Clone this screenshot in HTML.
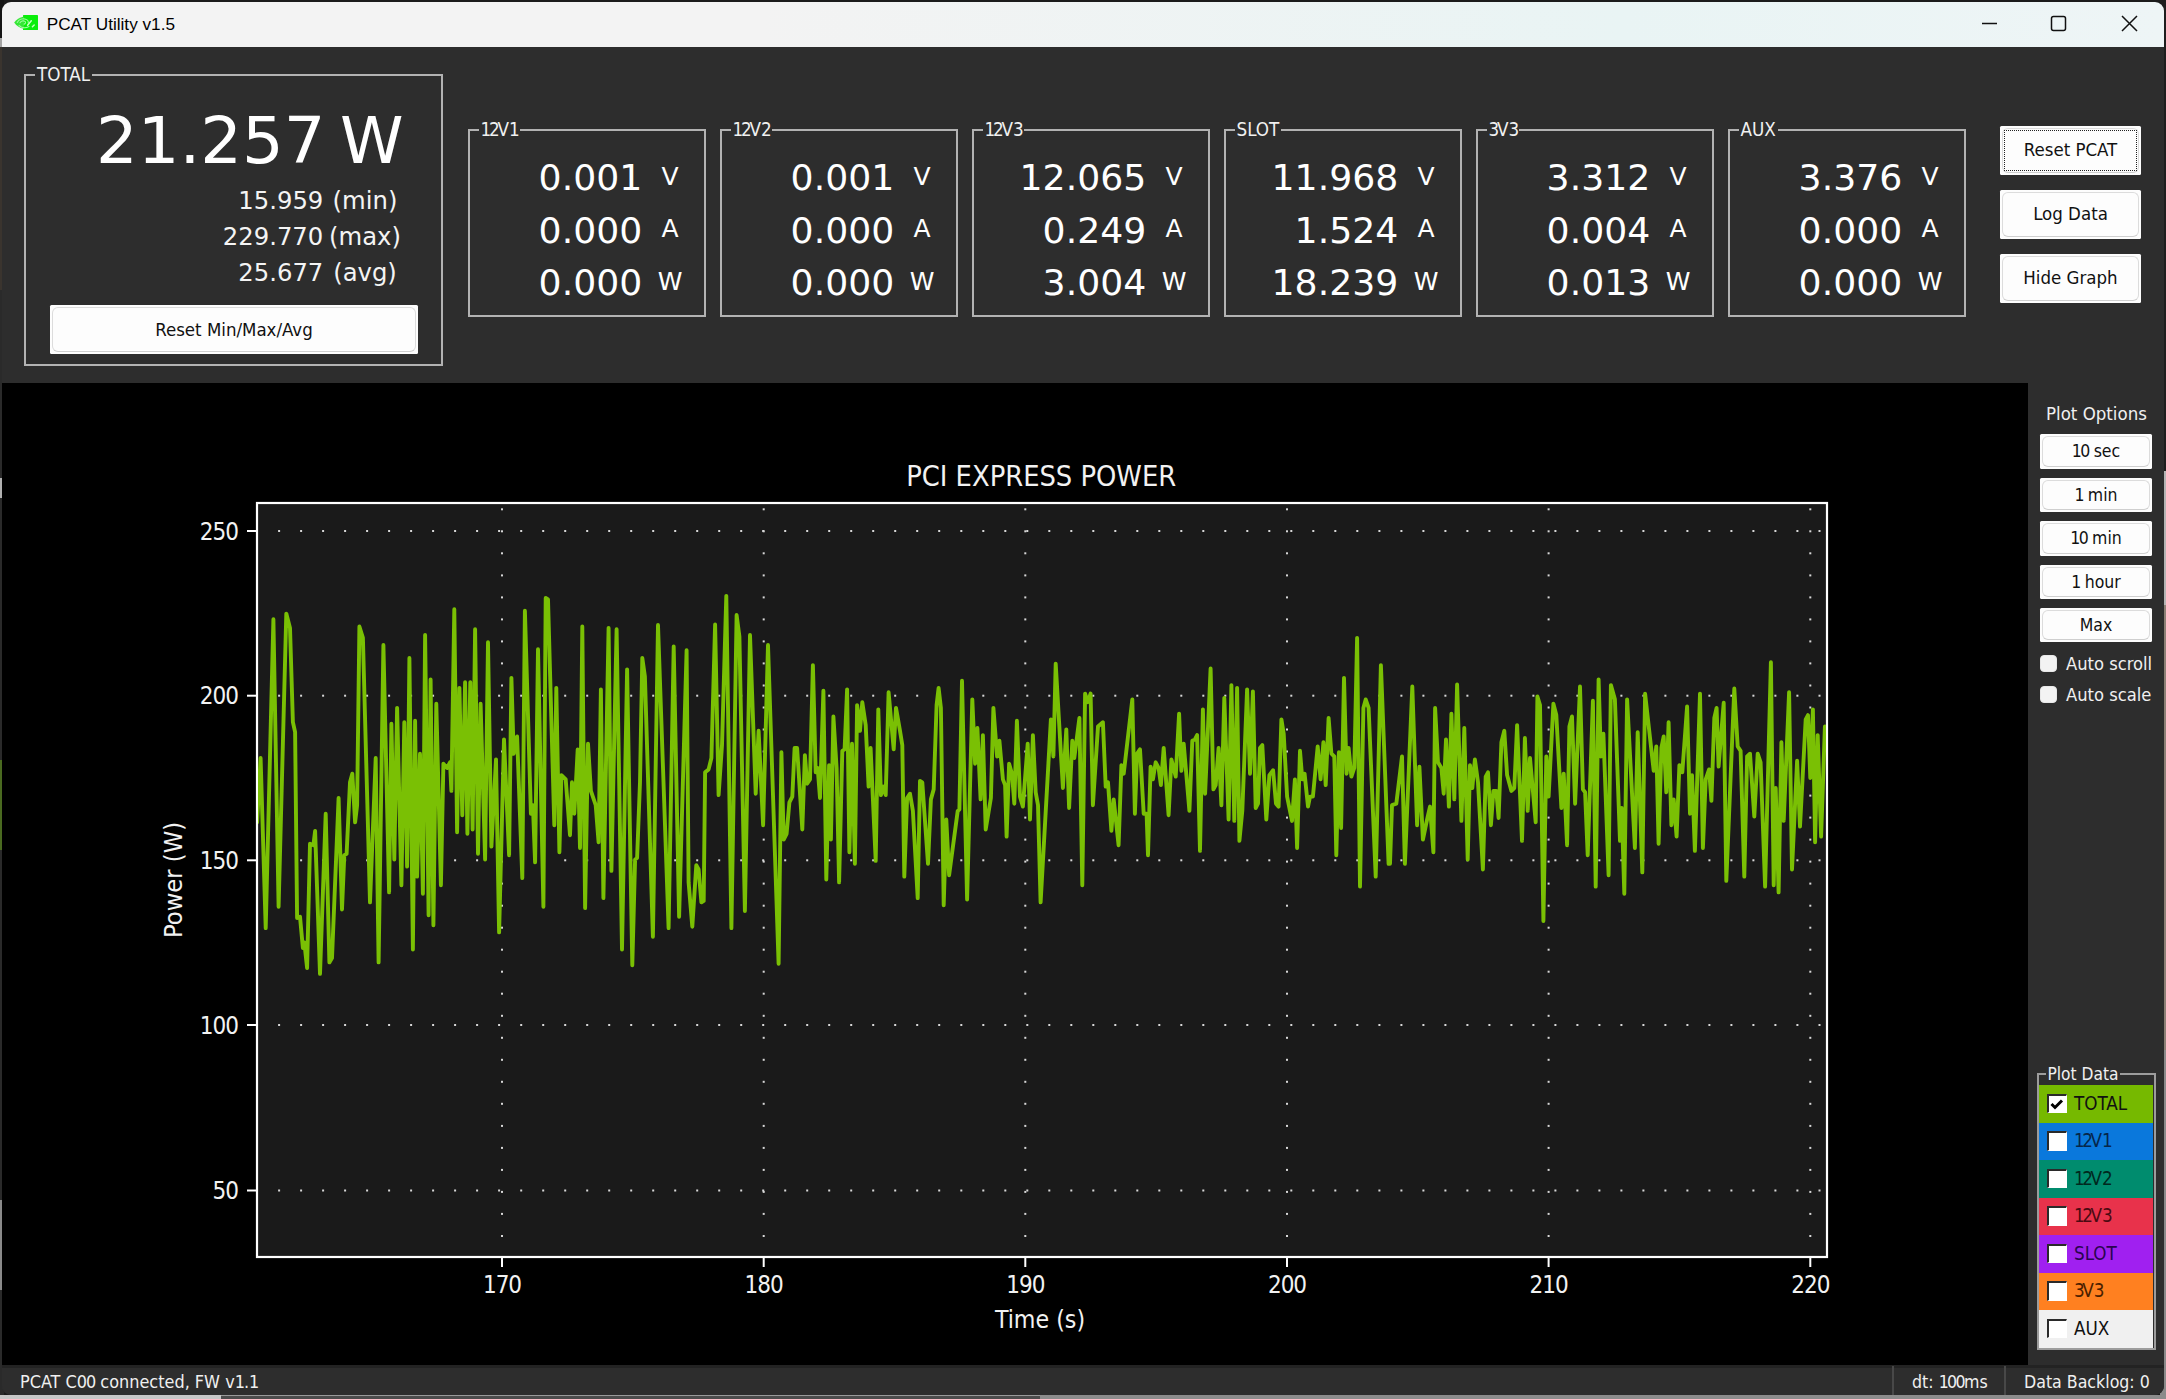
<!DOCTYPE html><html><head><meta charset="utf-8"><title>PCAT Utility v1.5</title><style>
*{box-sizing:border-box;margin:0;padding:0}
html,body{width:2166px;height:1399px;overflow:hidden;background:#1b1b1b}
body{position:relative;font-family:"Liberation Sans","DejaVu Sans",sans-serif;}
.abs{position:absolute}
#win{position:absolute;left:2px;top:2px;width:2161.7px;height:1393px;border-radius:9px;overflow:hidden;background:#2d2d2d}
#title{position:absolute;left:0;top:0;width:100%;height:45px;background:linear-gradient(90deg,#f3f3f3 0%,#f3f3f3 35%,#e9f4f4 75%,#eef5f6 100%)}
#title .t{position:absolute;left:44.7px;top:12px;font-size:17.2px;color:#000;white-space:nowrap;line-height:20px}
.gb{position:absolute;border:2px solid #b2b2b2}
.gbl{position:absolute;background:#2d2d2d;color:#f0f0f0;font-family:"DejaVu Sans Condensed","DejaVu Sans","Liberation Sans",sans-serif;white-space:nowrap;line-height:20px;padding:0 2px}
.num{position:absolute;font-family:"DejaVu Sans","Liberation Sans",sans-serif;color:#fff;white-space:nowrap;text-align:right}
.btn{position:absolute;background:#fdfdfd;border-radius:1.5px;color:#111;font-family:"DejaVu Sans Condensed","DejaVu Sans","Liberation Sans",sans-serif;text-align:center;white-space:nowrap}
.btn::after{content:"";position:absolute;left:2px;top:2px;right:2px;bottom:2px;border:1.5px solid #dcdcdc;border-bottom-color:#cfcfcf;border-radius:6px}
.lbl{position:absolute;color:#f0f0f0;font-family:"DejaVu Sans Condensed","DejaVu Sans","Liberation Sans",sans-serif;white-space:nowrap}
.cb{position:absolute;width:17px;height:17px;background:#f3f3f3;border:1px solid #e8e8e8;border-radius:4px}
.row{position:absolute;left:2037px;width:114px;height:37.5px}
.row .b{position:absolute;left:8px;top:8.7px;width:19.5px;height:19.5px;background:#fff;border-top:2px solid #2a2a2a;border-left:2px solid #2a2a2a;border-right:1.5px solid rgba(255,255,255,.55);border-bottom:1.5px solid rgba(255,255,255,.55)}
.row .x{position:absolute;left:35px;top:7.6px;font-family:"DejaVu Sans Condensed","DejaVu Sans","Liberation Sans",sans-serif;font-size:18.7px;line-height:22px;white-space:nowrap}
</style></head><body><div class="abs" style="left:0;top:0;width:4px;height:1399px;background:linear-gradient(180deg,#151515 0,#151515 38px,#a4a4a4 38px,#a4a4a4 47px,#3a342e 47px,#3a342e 290px,#2a2a2a 290px,#2a2a2a 478px,#b0b0b0 478px,#b0b0b0 498px,#2a2a2a 498px,#2a2a2a 760px,#4a6a20 760px,#4a6a20 850px,#2a2a2a 850px,#2a2a2a 1200px,#8a8a8a 1200px,#8a8a8a 1290px,#2a2a2a 1290px)"></div><div class="abs" style="left:2160px;top:0;width:6px;height:1399px;background:linear-gradient(180deg,#1e1e1e 0,#1e1e1e 471px,#b4b4b4 471px,#b4b4b4 605px,#8c8076 605px,#8c8076 1050px,#8a8a8a 1050px)"></div><div class="abs" style="left:0;top:1395px;width:2166px;height:4px;background:linear-gradient(90deg,#c6c6c6 0,#c6c6c6 221px,#4c4c4c 221px,#4c4c4c 1040px,#8c8c8c 1040px)"></div><div class="abs" style="left:221px;top:1395px;width:819px;height:1px;background:#9a9a9a"></div><div id="win"><div id="title"><svg class="abs" style="left:12px;top:13.1px" width="24" height="15.2" viewBox="0 0 24 15.2"><rect x="9" y="0" width="15" height="15.2" rx="0.6" fill="#0bee0b"/><path d="M10 1.6C5.5 2.4 2.2 5 0.2 7.4C2.2 10.4 5.5 13 10 13.8Z" fill="#35e635"/><g fill="none" stroke="#9cfb9c" stroke-width="1.1" stroke-linecap="round"><path d="M3.2 7.5C5 4.6 8.6 3.2 11.6 4.2C13.6 4.9 14.6 6.4 14.2 7.8"/><path d="M6 7.8C7 6 9.4 5.3 11 6.4C12 7.2 11.4 8.8 10 9.2"/><path d="M5 10.4C7.4 13 11.6 13.4 15 11.6"/></g><g stroke="#c8ffc0" stroke-width="1.5" stroke-linecap="round"><path d="M17.3 5.8L13.6 10.2"/><path d="M20.2 10L18.4 11.7"/></g></svg><div class="t">PCAT Utility v1.5</div><svg class="abs" style="left:1975px;top:10px" width="170" height="28" viewBox="0 0 170 28"><g stroke="#111" stroke-width="1.5" fill="none"><path d="M5 11.5H20"/><rect x="74.5" y="4.5" width="14" height="14" rx="2"/><path d="M145 4L160 19M160 4L145 19"/></g></svg></div><div class="gb" style="left:22px;top:72px;width:419px;height:292px"></div><div class="gbl" style="left:33px;top:62.8px;font-size:18.7px">TOTAL</div><div class="num" style="left:40px;width:283.5px;top:99px;font-size:64.3px;line-height:80px;transform:scaleX(1.02);transform-origin:100% 50%" id="big">21.257</div><div class="num" style="left:338px;width:66px;top:99px;font-size:64.3px;line-height:80px;text-align:left;transform-origin:0 50%;transform:scaleX(1.0)" id="bigw">W</div><div class="num" style="left:120px;width:201.3px;top:182px;font-size:24.3px;line-height:34px;color:#f4f4f4">15.959</div><div class="num" style="left:303px;width:120px;text-align:center;top:182px;font-size:24.3px;line-height:34px;color:#f4f4f4">(min)</div><div class="num" style="left:120px;width:201.3px;top:218px;font-size:24.3px;line-height:34px;color:#f4f4f4">229.770</div><div class="num" style="left:303px;width:120px;text-align:center;top:218px;font-size:24.3px;line-height:34px;color:#f4f4f4">(max)</div><div class="num" style="left:120px;width:201.3px;top:254px;font-size:24.3px;line-height:34px;color:#f4f4f4">25.677</div><div class="num" style="left:303px;width:120px;text-align:center;top:254px;font-size:24.3px;line-height:34px;color:#f4f4f4">(avg)</div><div class="btn" style="left:48px;top:303px;width:368px;height:49px;font-size:18.5px;line-height:49px">Reset Min/Max/Avg</div><div class="gb" style="left:466px;top:127px;width:238px;height:188px"></div><div class="gbl" style="left:476.5px;top:117.8px;font-size:18.7px"><span style="letter-spacing:-2.2px">12</span>V<span style="letter-spacing:-2.2px">1</span></div><div class="num" style="left:447px;width:193.3px;top:152.0px;font-size:35.7px;line-height:48px;transform:scaleX(1.015);transform-origin:100% 50%">0.001</div><div class="num" style="left:638px;width:60px;text-align:center;top:150.5px;font-size:25px;line-height:48px">V</div><div class="num" style="left:447px;width:193.3px;top:204.5px;font-size:35.7px;line-height:48px;transform:scaleX(1.015);transform-origin:100% 50%">0.000</div><div class="num" style="left:638px;width:60px;text-align:center;top:203px;font-size:25px;line-height:48px">A</div><div class="num" style="left:447px;width:193.3px;top:257.0px;font-size:35.7px;line-height:48px;transform:scaleX(1.015);transform-origin:100% 50%">0.000</div><div class="num" style="left:638px;width:60px;text-align:center;top:255.5px;font-size:25px;line-height:48px">W</div><div class="gb" style="left:718px;top:127px;width:238px;height:188px"></div><div class="gbl" style="left:728.5px;top:117.8px;font-size:18.7px"><span style="letter-spacing:-2.2px">12</span>V<span style="letter-spacing:-2.2px">2</span></div><div class="num" style="left:699px;width:193.3px;top:152.0px;font-size:35.7px;line-height:48px;transform:scaleX(1.015);transform-origin:100% 50%">0.001</div><div class="num" style="left:890px;width:60px;text-align:center;top:150.5px;font-size:25px;line-height:48px">V</div><div class="num" style="left:699px;width:193.3px;top:204.5px;font-size:35.7px;line-height:48px;transform:scaleX(1.015);transform-origin:100% 50%">0.000</div><div class="num" style="left:890px;width:60px;text-align:center;top:203px;font-size:25px;line-height:48px">A</div><div class="num" style="left:699px;width:193.3px;top:257.0px;font-size:35.7px;line-height:48px;transform:scaleX(1.015);transform-origin:100% 50%">0.000</div><div class="num" style="left:890px;width:60px;text-align:center;top:255.5px;font-size:25px;line-height:48px">W</div><div class="gb" style="left:970px;top:127px;width:238px;height:188px"></div><div class="gbl" style="left:980.5px;top:117.8px;font-size:18.7px"><span style="letter-spacing:-2.2px">12</span>V<span style="letter-spacing:-2.2px">3</span></div><div class="num" style="left:951px;width:193.3px;top:152.0px;font-size:35.7px;line-height:48px;transform:scaleX(1.015);transform-origin:100% 50%">12.065</div><div class="num" style="left:1142px;width:60px;text-align:center;top:150.5px;font-size:25px;line-height:48px">V</div><div class="num" style="left:951px;width:193.3px;top:204.5px;font-size:35.7px;line-height:48px;transform:scaleX(1.015);transform-origin:100% 50%">0.249</div><div class="num" style="left:1142px;width:60px;text-align:center;top:203px;font-size:25px;line-height:48px">A</div><div class="num" style="left:951px;width:193.3px;top:257.0px;font-size:35.7px;line-height:48px;transform:scaleX(1.015);transform-origin:100% 50%">3.004</div><div class="num" style="left:1142px;width:60px;text-align:center;top:255.5px;font-size:25px;line-height:48px">W</div><div class="gb" style="left:1222px;top:127px;width:238px;height:188px"></div><div class="gbl" style="left:1232.5px;top:117.8px;font-size:18.7px">SLOT</div><div class="num" style="left:1203px;width:193.3px;top:152.0px;font-size:35.7px;line-height:48px;transform:scaleX(1.015);transform-origin:100% 50%">11.968</div><div class="num" style="left:1394px;width:60px;text-align:center;top:150.5px;font-size:25px;line-height:48px">V</div><div class="num" style="left:1203px;width:193.3px;top:204.5px;font-size:35.7px;line-height:48px;transform:scaleX(1.015);transform-origin:100% 50%">1.524</div><div class="num" style="left:1394px;width:60px;text-align:center;top:203px;font-size:25px;line-height:48px">A</div><div class="num" style="left:1203px;width:193.3px;top:257.0px;font-size:35.7px;line-height:48px;transform:scaleX(1.015);transform-origin:100% 50%">18.239</div><div class="num" style="left:1394px;width:60px;text-align:center;top:255.5px;font-size:25px;line-height:48px">W</div><div class="gb" style="left:1474px;top:127px;width:238px;height:188px"></div><div class="gbl" style="left:1484.5px;top:117.8px;font-size:18.7px"><span style="letter-spacing:-2.2px">3</span>V<span style="letter-spacing:-2.2px">3</span></div><div class="num" style="left:1455px;width:193.3px;top:152.0px;font-size:35.7px;line-height:48px;transform:scaleX(1.015);transform-origin:100% 50%">3.312</div><div class="num" style="left:1646px;width:60px;text-align:center;top:150.5px;font-size:25px;line-height:48px">V</div><div class="num" style="left:1455px;width:193.3px;top:204.5px;font-size:35.7px;line-height:48px;transform:scaleX(1.015);transform-origin:100% 50%">0.004</div><div class="num" style="left:1646px;width:60px;text-align:center;top:203px;font-size:25px;line-height:48px">A</div><div class="num" style="left:1455px;width:193.3px;top:257.0px;font-size:35.7px;line-height:48px;transform:scaleX(1.015);transform-origin:100% 50%">0.013</div><div class="num" style="left:1646px;width:60px;text-align:center;top:255.5px;font-size:25px;line-height:48px">W</div><div class="gb" style="left:1726px;top:127px;width:238px;height:188px"></div><div class="gbl" style="left:1736.5px;top:117.8px;font-size:18.7px">AUX</div><div class="num" style="left:1707px;width:193.3px;top:152.0px;font-size:35.7px;line-height:48px;transform:scaleX(1.015);transform-origin:100% 50%">3.376</div><div class="num" style="left:1898px;width:60px;text-align:center;top:150.5px;font-size:25px;line-height:48px">V</div><div class="num" style="left:1707px;width:193.3px;top:204.5px;font-size:35.7px;line-height:48px;transform:scaleX(1.015);transform-origin:100% 50%">0.000</div><div class="num" style="left:1898px;width:60px;text-align:center;top:203px;font-size:25px;line-height:48px">A</div><div class="num" style="left:1707px;width:193.3px;top:257.0px;font-size:35.7px;line-height:48px;transform:scaleX(1.015);transform-origin:100% 50%">0.000</div><div class="num" style="left:1898px;width:60px;text-align:center;top:255.5px;font-size:25px;line-height:48px">W</div><div class="btn" style="left:1998px;top:123.5px;width:141px;height:49px;font-size:18.5px;line-height:47.5px">Reset PCAT</div><div class="btn" style="left:1998px;top:187.8px;width:141px;height:49px;font-size:18.5px;line-height:47.5px">Log Data</div><div class="btn" style="left:1998px;top:252.1px;width:141px;height:49px;font-size:18.5px;line-height:47.5px">Hide Graph</div><div class="abs" style="left:2002px;top:127.5px;width:133px;height:41px;border:1.5px dotted #222"></div><div class="abs" style="left:0;top:381px;width:2026px;height:983px;background:#000"></div><svg class="abs" style="left:0px;top:381px" width="2026" height="983" viewBox="0 0 2026 983" font-family='"DejaVu Sans Condensed","DejaVu Sans","Liberation Sans",sans-serif'><rect x="255" y="120" width="1570" height="754" fill="#1a1a1a" stroke="#fff" stroke-width="2.2"/><g fill="#d8d8d8"><rect x="276.1" y="147.0" width="2" height="2"/><rect x="298.1" y="147.0" width="2" height="2"/><rect x="320.1" y="147.0" width="2" height="2"/><rect x="342.1" y="147.0" width="2" height="2"/><rect x="364.1" y="147.0" width="2" height="2"/><rect x="386.1" y="147.0" width="2" height="2"/><rect x="408.1" y="147.0" width="2" height="2"/><rect x="430.1" y="147.0" width="2" height="2"/><rect x="452.1" y="147.0" width="2" height="2"/><rect x="474.1" y="147.0" width="2" height="2"/><rect x="496.1" y="147.0" width="2" height="2"/><rect x="518.2" y="147.0" width="2" height="2"/><rect x="540.2" y="147.0" width="2" height="2"/><rect x="562.2" y="147.0" width="2" height="2"/><rect x="584.2" y="147.0" width="2" height="2"/><rect x="606.2" y="147.0" width="2" height="2"/><rect x="628.2" y="147.0" width="2" height="2"/><rect x="650.2" y="147.0" width="2" height="2"/><rect x="672.2" y="147.0" width="2" height="2"/><rect x="694.2" y="147.0" width="2" height="2"/><rect x="716.2" y="147.0" width="2" height="2"/><rect x="738.2" y="147.0" width="2" height="2"/><rect x="760.2" y="147.0" width="2" height="2"/><rect x="782.2" y="147.0" width="2" height="2"/><rect x="804.2" y="147.0" width="2" height="2"/><rect x="826.2" y="147.0" width="2" height="2"/><rect x="848.2" y="147.0" width="2" height="2"/><rect x="870.2" y="147.0" width="2" height="2"/><rect x="892.2" y="147.0" width="2" height="2"/><rect x="914.2" y="147.0" width="2" height="2"/><rect x="936.2" y="147.0" width="2" height="2"/><rect x="958.3" y="147.0" width="2" height="2"/><rect x="980.3" y="147.0" width="2" height="2"/><rect x="1002.3" y="147.0" width="2" height="2"/><rect x="1024.3" y="147.0" width="2" height="2"/><rect x="1046.3" y="147.0" width="2" height="2"/><rect x="1068.3" y="147.0" width="2" height="2"/><rect x="1090.3" y="147.0" width="2" height="2"/><rect x="1112.3" y="147.0" width="2" height="2"/><rect x="1134.3" y="147.0" width="2" height="2"/><rect x="1156.3" y="147.0" width="2" height="2"/><rect x="1178.3" y="147.0" width="2" height="2"/><rect x="1200.3" y="147.0" width="2" height="2"/><rect x="1222.3" y="147.0" width="2" height="2"/><rect x="1244.3" y="147.0" width="2" height="2"/><rect x="1266.3" y="147.0" width="2" height="2"/><rect x="1288.3" y="147.0" width="2" height="2"/><rect x="1310.3" y="147.0" width="2" height="2"/><rect x="1332.3" y="147.0" width="2" height="2"/><rect x="1354.3" y="147.0" width="2" height="2"/><rect x="1376.4" y="147.0" width="2" height="2"/><rect x="1398.4" y="147.0" width="2" height="2"/><rect x="1420.4" y="147.0" width="2" height="2"/><rect x="1442.4" y="147.0" width="2" height="2"/><rect x="1464.4" y="147.0" width="2" height="2"/><rect x="1486.4" y="147.0" width="2" height="2"/><rect x="1508.4" y="147.0" width="2" height="2"/><rect x="1530.4" y="147.0" width="2" height="2"/><rect x="1552.4" y="147.0" width="2" height="2"/><rect x="1574.4" y="147.0" width="2" height="2"/><rect x="1596.4" y="147.0" width="2" height="2"/><rect x="1618.4" y="147.0" width="2" height="2"/><rect x="1640.4" y="147.0" width="2" height="2"/><rect x="1662.4" y="147.0" width="2" height="2"/><rect x="1684.4" y="147.0" width="2" height="2"/><rect x="1706.4" y="147.0" width="2" height="2"/><rect x="1728.4" y="147.0" width="2" height="2"/><rect x="1750.4" y="147.0" width="2" height="2"/><rect x="1772.4" y="147.0" width="2" height="2"/><rect x="1794.4" y="147.0" width="2" height="2"/><rect x="1816.5" y="147.0" width="2" height="2"/><rect x="276.1" y="311.7" width="2" height="2"/><rect x="298.1" y="311.7" width="2" height="2"/><rect x="320.1" y="311.7" width="2" height="2"/><rect x="342.1" y="311.7" width="2" height="2"/><rect x="364.1" y="311.7" width="2" height="2"/><rect x="386.1" y="311.7" width="2" height="2"/><rect x="408.1" y="311.7" width="2" height="2"/><rect x="430.1" y="311.7" width="2" height="2"/><rect x="452.1" y="311.7" width="2" height="2"/><rect x="474.1" y="311.7" width="2" height="2"/><rect x="496.1" y="311.7" width="2" height="2"/><rect x="518.2" y="311.7" width="2" height="2"/><rect x="540.2" y="311.7" width="2" height="2"/><rect x="562.2" y="311.7" width="2" height="2"/><rect x="584.2" y="311.7" width="2" height="2"/><rect x="606.2" y="311.7" width="2" height="2"/><rect x="628.2" y="311.7" width="2" height="2"/><rect x="650.2" y="311.7" width="2" height="2"/><rect x="672.2" y="311.7" width="2" height="2"/><rect x="694.2" y="311.7" width="2" height="2"/><rect x="716.2" y="311.7" width="2" height="2"/><rect x="738.2" y="311.7" width="2" height="2"/><rect x="760.2" y="311.7" width="2" height="2"/><rect x="782.2" y="311.7" width="2" height="2"/><rect x="804.2" y="311.7" width="2" height="2"/><rect x="826.2" y="311.7" width="2" height="2"/><rect x="848.2" y="311.7" width="2" height="2"/><rect x="870.2" y="311.7" width="2" height="2"/><rect x="892.2" y="311.7" width="2" height="2"/><rect x="914.2" y="311.7" width="2" height="2"/><rect x="936.2" y="311.7" width="2" height="2"/><rect x="958.3" y="311.7" width="2" height="2"/><rect x="980.3" y="311.7" width="2" height="2"/><rect x="1002.3" y="311.7" width="2" height="2"/><rect x="1024.3" y="311.7" width="2" height="2"/><rect x="1046.3" y="311.7" width="2" height="2"/><rect x="1068.3" y="311.7" width="2" height="2"/><rect x="1090.3" y="311.7" width="2" height="2"/><rect x="1112.3" y="311.7" width="2" height="2"/><rect x="1134.3" y="311.7" width="2" height="2"/><rect x="1156.3" y="311.7" width="2" height="2"/><rect x="1178.3" y="311.7" width="2" height="2"/><rect x="1200.3" y="311.7" width="2" height="2"/><rect x="1222.3" y="311.7" width="2" height="2"/><rect x="1244.3" y="311.7" width="2" height="2"/><rect x="1266.3" y="311.7" width="2" height="2"/><rect x="1288.3" y="311.7" width="2" height="2"/><rect x="1310.3" y="311.7" width="2" height="2"/><rect x="1332.3" y="311.7" width="2" height="2"/><rect x="1354.3" y="311.7" width="2" height="2"/><rect x="1376.4" y="311.7" width="2" height="2"/><rect x="1398.4" y="311.7" width="2" height="2"/><rect x="1420.4" y="311.7" width="2" height="2"/><rect x="1442.4" y="311.7" width="2" height="2"/><rect x="1464.4" y="311.7" width="2" height="2"/><rect x="1486.4" y="311.7" width="2" height="2"/><rect x="1508.4" y="311.7" width="2" height="2"/><rect x="1530.4" y="311.7" width="2" height="2"/><rect x="1552.4" y="311.7" width="2" height="2"/><rect x="1574.4" y="311.7" width="2" height="2"/><rect x="1596.4" y="311.7" width="2" height="2"/><rect x="1618.4" y="311.7" width="2" height="2"/><rect x="1640.4" y="311.7" width="2" height="2"/><rect x="1662.4" y="311.7" width="2" height="2"/><rect x="1684.4" y="311.7" width="2" height="2"/><rect x="1706.4" y="311.7" width="2" height="2"/><rect x="1728.4" y="311.7" width="2" height="2"/><rect x="1750.4" y="311.7" width="2" height="2"/><rect x="1772.4" y="311.7" width="2" height="2"/><rect x="1794.4" y="311.7" width="2" height="2"/><rect x="1816.5" y="311.7" width="2" height="2"/><rect x="276.1" y="476.3" width="2" height="2"/><rect x="298.1" y="476.3" width="2" height="2"/><rect x="320.1" y="476.3" width="2" height="2"/><rect x="342.1" y="476.3" width="2" height="2"/><rect x="364.1" y="476.3" width="2" height="2"/><rect x="386.1" y="476.3" width="2" height="2"/><rect x="408.1" y="476.3" width="2" height="2"/><rect x="430.1" y="476.3" width="2" height="2"/><rect x="452.1" y="476.3" width="2" height="2"/><rect x="474.1" y="476.3" width="2" height="2"/><rect x="496.1" y="476.3" width="2" height="2"/><rect x="518.2" y="476.3" width="2" height="2"/><rect x="540.2" y="476.3" width="2" height="2"/><rect x="562.2" y="476.3" width="2" height="2"/><rect x="584.2" y="476.3" width="2" height="2"/><rect x="606.2" y="476.3" width="2" height="2"/><rect x="628.2" y="476.3" width="2" height="2"/><rect x="650.2" y="476.3" width="2" height="2"/><rect x="672.2" y="476.3" width="2" height="2"/><rect x="694.2" y="476.3" width="2" height="2"/><rect x="716.2" y="476.3" width="2" height="2"/><rect x="738.2" y="476.3" width="2" height="2"/><rect x="760.2" y="476.3" width="2" height="2"/><rect x="782.2" y="476.3" width="2" height="2"/><rect x="804.2" y="476.3" width="2" height="2"/><rect x="826.2" y="476.3" width="2" height="2"/><rect x="848.2" y="476.3" width="2" height="2"/><rect x="870.2" y="476.3" width="2" height="2"/><rect x="892.2" y="476.3" width="2" height="2"/><rect x="914.2" y="476.3" width="2" height="2"/><rect x="936.2" y="476.3" width="2" height="2"/><rect x="958.3" y="476.3" width="2" height="2"/><rect x="980.3" y="476.3" width="2" height="2"/><rect x="1002.3" y="476.3" width="2" height="2"/><rect x="1024.3" y="476.3" width="2" height="2"/><rect x="1046.3" y="476.3" width="2" height="2"/><rect x="1068.3" y="476.3" width="2" height="2"/><rect x="1090.3" y="476.3" width="2" height="2"/><rect x="1112.3" y="476.3" width="2" height="2"/><rect x="1134.3" y="476.3" width="2" height="2"/><rect x="1156.3" y="476.3" width="2" height="2"/><rect x="1178.3" y="476.3" width="2" height="2"/><rect x="1200.3" y="476.3" width="2" height="2"/><rect x="1222.3" y="476.3" width="2" height="2"/><rect x="1244.3" y="476.3" width="2" height="2"/><rect x="1266.3" y="476.3" width="2" height="2"/><rect x="1288.3" y="476.3" width="2" height="2"/><rect x="1310.3" y="476.3" width="2" height="2"/><rect x="1332.3" y="476.3" width="2" height="2"/><rect x="1354.3" y="476.3" width="2" height="2"/><rect x="1376.4" y="476.3" width="2" height="2"/><rect x="1398.4" y="476.3" width="2" height="2"/><rect x="1420.4" y="476.3" width="2" height="2"/><rect x="1442.4" y="476.3" width="2" height="2"/><rect x="1464.4" y="476.3" width="2" height="2"/><rect x="1486.4" y="476.3" width="2" height="2"/><rect x="1508.4" y="476.3" width="2" height="2"/><rect x="1530.4" y="476.3" width="2" height="2"/><rect x="1552.4" y="476.3" width="2" height="2"/><rect x="1574.4" y="476.3" width="2" height="2"/><rect x="1596.4" y="476.3" width="2" height="2"/><rect x="1618.4" y="476.3" width="2" height="2"/><rect x="1640.4" y="476.3" width="2" height="2"/><rect x="1662.4" y="476.3" width="2" height="2"/><rect x="1684.4" y="476.3" width="2" height="2"/><rect x="1706.4" y="476.3" width="2" height="2"/><rect x="1728.4" y="476.3" width="2" height="2"/><rect x="1750.4" y="476.3" width="2" height="2"/><rect x="1772.4" y="476.3" width="2" height="2"/><rect x="1794.4" y="476.3" width="2" height="2"/><rect x="1816.5" y="476.3" width="2" height="2"/><rect x="276.1" y="641.0" width="2" height="2"/><rect x="298.1" y="641.0" width="2" height="2"/><rect x="320.1" y="641.0" width="2" height="2"/><rect x="342.1" y="641.0" width="2" height="2"/><rect x="364.1" y="641.0" width="2" height="2"/><rect x="386.1" y="641.0" width="2" height="2"/><rect x="408.1" y="641.0" width="2" height="2"/><rect x="430.1" y="641.0" width="2" height="2"/><rect x="452.1" y="641.0" width="2" height="2"/><rect x="474.1" y="641.0" width="2" height="2"/><rect x="496.1" y="641.0" width="2" height="2"/><rect x="518.2" y="641.0" width="2" height="2"/><rect x="540.2" y="641.0" width="2" height="2"/><rect x="562.2" y="641.0" width="2" height="2"/><rect x="584.2" y="641.0" width="2" height="2"/><rect x="606.2" y="641.0" width="2" height="2"/><rect x="628.2" y="641.0" width="2" height="2"/><rect x="650.2" y="641.0" width="2" height="2"/><rect x="672.2" y="641.0" width="2" height="2"/><rect x="694.2" y="641.0" width="2" height="2"/><rect x="716.2" y="641.0" width="2" height="2"/><rect x="738.2" y="641.0" width="2" height="2"/><rect x="760.2" y="641.0" width="2" height="2"/><rect x="782.2" y="641.0" width="2" height="2"/><rect x="804.2" y="641.0" width="2" height="2"/><rect x="826.2" y="641.0" width="2" height="2"/><rect x="848.2" y="641.0" width="2" height="2"/><rect x="870.2" y="641.0" width="2" height="2"/><rect x="892.2" y="641.0" width="2" height="2"/><rect x="914.2" y="641.0" width="2" height="2"/><rect x="936.2" y="641.0" width="2" height="2"/><rect x="958.3" y="641.0" width="2" height="2"/><rect x="980.3" y="641.0" width="2" height="2"/><rect x="1002.3" y="641.0" width="2" height="2"/><rect x="1024.3" y="641.0" width="2" height="2"/><rect x="1046.3" y="641.0" width="2" height="2"/><rect x="1068.3" y="641.0" width="2" height="2"/><rect x="1090.3" y="641.0" width="2" height="2"/><rect x="1112.3" y="641.0" width="2" height="2"/><rect x="1134.3" y="641.0" width="2" height="2"/><rect x="1156.3" y="641.0" width="2" height="2"/><rect x="1178.3" y="641.0" width="2" height="2"/><rect x="1200.3" y="641.0" width="2" height="2"/><rect x="1222.3" y="641.0" width="2" height="2"/><rect x="1244.3" y="641.0" width="2" height="2"/><rect x="1266.3" y="641.0" width="2" height="2"/><rect x="1288.3" y="641.0" width="2" height="2"/><rect x="1310.3" y="641.0" width="2" height="2"/><rect x="1332.3" y="641.0" width="2" height="2"/><rect x="1354.3" y="641.0" width="2" height="2"/><rect x="1376.4" y="641.0" width="2" height="2"/><rect x="1398.4" y="641.0" width="2" height="2"/><rect x="1420.4" y="641.0" width="2" height="2"/><rect x="1442.4" y="641.0" width="2" height="2"/><rect x="1464.4" y="641.0" width="2" height="2"/><rect x="1486.4" y="641.0" width="2" height="2"/><rect x="1508.4" y="641.0" width="2" height="2"/><rect x="1530.4" y="641.0" width="2" height="2"/><rect x="1552.4" y="641.0" width="2" height="2"/><rect x="1574.4" y="641.0" width="2" height="2"/><rect x="1596.4" y="641.0" width="2" height="2"/><rect x="1618.4" y="641.0" width="2" height="2"/><rect x="1640.4" y="641.0" width="2" height="2"/><rect x="1662.4" y="641.0" width="2" height="2"/><rect x="1684.4" y="641.0" width="2" height="2"/><rect x="1706.4" y="641.0" width="2" height="2"/><rect x="1728.4" y="641.0" width="2" height="2"/><rect x="1750.4" y="641.0" width="2" height="2"/><rect x="1772.4" y="641.0" width="2" height="2"/><rect x="1794.4" y="641.0" width="2" height="2"/><rect x="1816.5" y="641.0" width="2" height="2"/><rect x="276.1" y="806.5" width="2" height="2"/><rect x="298.1" y="806.5" width="2" height="2"/><rect x="320.1" y="806.5" width="2" height="2"/><rect x="342.1" y="806.5" width="2" height="2"/><rect x="364.1" y="806.5" width="2" height="2"/><rect x="386.1" y="806.5" width="2" height="2"/><rect x="408.1" y="806.5" width="2" height="2"/><rect x="430.1" y="806.5" width="2" height="2"/><rect x="452.1" y="806.5" width="2" height="2"/><rect x="474.1" y="806.5" width="2" height="2"/><rect x="496.1" y="806.5" width="2" height="2"/><rect x="518.2" y="806.5" width="2" height="2"/><rect x="540.2" y="806.5" width="2" height="2"/><rect x="562.2" y="806.5" width="2" height="2"/><rect x="584.2" y="806.5" width="2" height="2"/><rect x="606.2" y="806.5" width="2" height="2"/><rect x="628.2" y="806.5" width="2" height="2"/><rect x="650.2" y="806.5" width="2" height="2"/><rect x="672.2" y="806.5" width="2" height="2"/><rect x="694.2" y="806.5" width="2" height="2"/><rect x="716.2" y="806.5" width="2" height="2"/><rect x="738.2" y="806.5" width="2" height="2"/><rect x="760.2" y="806.5" width="2" height="2"/><rect x="782.2" y="806.5" width="2" height="2"/><rect x="804.2" y="806.5" width="2" height="2"/><rect x="826.2" y="806.5" width="2" height="2"/><rect x="848.2" y="806.5" width="2" height="2"/><rect x="870.2" y="806.5" width="2" height="2"/><rect x="892.2" y="806.5" width="2" height="2"/><rect x="914.2" y="806.5" width="2" height="2"/><rect x="936.2" y="806.5" width="2" height="2"/><rect x="958.3" y="806.5" width="2" height="2"/><rect x="980.3" y="806.5" width="2" height="2"/><rect x="1002.3" y="806.5" width="2" height="2"/><rect x="1024.3" y="806.5" width="2" height="2"/><rect x="1046.3" y="806.5" width="2" height="2"/><rect x="1068.3" y="806.5" width="2" height="2"/><rect x="1090.3" y="806.5" width="2" height="2"/><rect x="1112.3" y="806.5" width="2" height="2"/><rect x="1134.3" y="806.5" width="2" height="2"/><rect x="1156.3" y="806.5" width="2" height="2"/><rect x="1178.3" y="806.5" width="2" height="2"/><rect x="1200.3" y="806.5" width="2" height="2"/><rect x="1222.3" y="806.5" width="2" height="2"/><rect x="1244.3" y="806.5" width="2" height="2"/><rect x="1266.3" y="806.5" width="2" height="2"/><rect x="1288.3" y="806.5" width="2" height="2"/><rect x="1310.3" y="806.5" width="2" height="2"/><rect x="1332.3" y="806.5" width="2" height="2"/><rect x="1354.3" y="806.5" width="2" height="2"/><rect x="1376.4" y="806.5" width="2" height="2"/><rect x="1398.4" y="806.5" width="2" height="2"/><rect x="1420.4" y="806.5" width="2" height="2"/><rect x="1442.4" y="806.5" width="2" height="2"/><rect x="1464.4" y="806.5" width="2" height="2"/><rect x="1486.4" y="806.5" width="2" height="2"/><rect x="1508.4" y="806.5" width="2" height="2"/><rect x="1530.4" y="806.5" width="2" height="2"/><rect x="1552.4" y="806.5" width="2" height="2"/><rect x="1574.4" y="806.5" width="2" height="2"/><rect x="1596.4" y="806.5" width="2" height="2"/><rect x="1618.4" y="806.5" width="2" height="2"/><rect x="1640.4" y="806.5" width="2" height="2"/><rect x="1662.4" y="806.5" width="2" height="2"/><rect x="1684.4" y="806.5" width="2" height="2"/><rect x="1706.4" y="806.5" width="2" height="2"/><rect x="1728.4" y="806.5" width="2" height="2"/><rect x="1750.4" y="806.5" width="2" height="2"/><rect x="1772.4" y="806.5" width="2" height="2"/><rect x="1794.4" y="806.5" width="2" height="2"/><rect x="1816.5" y="806.5" width="2" height="2"/><rect x="499.0" y="125.3" width="2" height="2"/><rect x="499.0" y="147.3" width="2" height="2"/><rect x="499.0" y="169.3" width="2" height="2"/><rect x="499.0" y="191.4" width="2" height="2"/><rect x="499.0" y="213.4" width="2" height="2"/><rect x="499.0" y="235.4" width="2" height="2"/><rect x="499.0" y="257.4" width="2" height="2"/><rect x="499.0" y="279.4" width="2" height="2"/><rect x="499.0" y="301.5" width="2" height="2"/><rect x="499.0" y="323.5" width="2" height="2"/><rect x="499.0" y="345.5" width="2" height="2"/><rect x="499.0" y="367.5" width="2" height="2"/><rect x="499.0" y="389.5" width="2" height="2"/><rect x="499.0" y="411.6" width="2" height="2"/><rect x="499.0" y="433.6" width="2" height="2"/><rect x="499.0" y="455.6" width="2" height="2"/><rect x="499.0" y="477.6" width="2" height="2"/><rect x="499.0" y="499.6" width="2" height="2"/><rect x="499.0" y="521.7" width="2" height="2"/><rect x="499.0" y="543.7" width="2" height="2"/><rect x="499.0" y="565.7" width="2" height="2"/><rect x="499.0" y="587.7" width="2" height="2"/><rect x="499.0" y="609.7" width="2" height="2"/><rect x="499.0" y="631.8" width="2" height="2"/><rect x="499.0" y="653.8" width="2" height="2"/><rect x="499.0" y="675.8" width="2" height="2"/><rect x="499.0" y="697.8" width="2" height="2"/><rect x="499.0" y="719.8" width="2" height="2"/><rect x="499.0" y="741.9" width="2" height="2"/><rect x="499.0" y="763.9" width="2" height="2"/><rect x="499.0" y="785.9" width="2" height="2"/><rect x="499.0" y="807.9" width="2" height="2"/><rect x="499.0" y="829.9" width="2" height="2"/><rect x="499.0" y="852.0" width="2" height="2"/><rect x="760.7" y="125.3" width="2" height="2"/><rect x="760.7" y="147.3" width="2" height="2"/><rect x="760.7" y="169.3" width="2" height="2"/><rect x="760.7" y="191.4" width="2" height="2"/><rect x="760.7" y="213.4" width="2" height="2"/><rect x="760.7" y="235.4" width="2" height="2"/><rect x="760.7" y="257.4" width="2" height="2"/><rect x="760.7" y="279.4" width="2" height="2"/><rect x="760.7" y="301.5" width="2" height="2"/><rect x="760.7" y="323.5" width="2" height="2"/><rect x="760.7" y="345.5" width="2" height="2"/><rect x="760.7" y="367.5" width="2" height="2"/><rect x="760.7" y="389.5" width="2" height="2"/><rect x="760.7" y="411.6" width="2" height="2"/><rect x="760.7" y="433.6" width="2" height="2"/><rect x="760.7" y="455.6" width="2" height="2"/><rect x="760.7" y="477.6" width="2" height="2"/><rect x="760.7" y="499.6" width="2" height="2"/><rect x="760.7" y="521.7" width="2" height="2"/><rect x="760.7" y="543.7" width="2" height="2"/><rect x="760.7" y="565.7" width="2" height="2"/><rect x="760.7" y="587.7" width="2" height="2"/><rect x="760.7" y="609.7" width="2" height="2"/><rect x="760.7" y="631.8" width="2" height="2"/><rect x="760.7" y="653.8" width="2" height="2"/><rect x="760.7" y="675.8" width="2" height="2"/><rect x="760.7" y="697.8" width="2" height="2"/><rect x="760.7" y="719.8" width="2" height="2"/><rect x="760.7" y="741.9" width="2" height="2"/><rect x="760.7" y="763.9" width="2" height="2"/><rect x="760.7" y="785.9" width="2" height="2"/><rect x="760.7" y="807.9" width="2" height="2"/><rect x="760.7" y="829.9" width="2" height="2"/><rect x="760.7" y="852.0" width="2" height="2"/><rect x="1022.3" y="125.3" width="2" height="2"/><rect x="1022.3" y="147.3" width="2" height="2"/><rect x="1022.3" y="169.3" width="2" height="2"/><rect x="1022.3" y="191.4" width="2" height="2"/><rect x="1022.3" y="213.4" width="2" height="2"/><rect x="1022.3" y="235.4" width="2" height="2"/><rect x="1022.3" y="257.4" width="2" height="2"/><rect x="1022.3" y="279.4" width="2" height="2"/><rect x="1022.3" y="301.5" width="2" height="2"/><rect x="1022.3" y="323.5" width="2" height="2"/><rect x="1022.3" y="345.5" width="2" height="2"/><rect x="1022.3" y="367.5" width="2" height="2"/><rect x="1022.3" y="389.5" width="2" height="2"/><rect x="1022.3" y="411.6" width="2" height="2"/><rect x="1022.3" y="433.6" width="2" height="2"/><rect x="1022.3" y="455.6" width="2" height="2"/><rect x="1022.3" y="477.6" width="2" height="2"/><rect x="1022.3" y="499.6" width="2" height="2"/><rect x="1022.3" y="521.7" width="2" height="2"/><rect x="1022.3" y="543.7" width="2" height="2"/><rect x="1022.3" y="565.7" width="2" height="2"/><rect x="1022.3" y="587.7" width="2" height="2"/><rect x="1022.3" y="609.7" width="2" height="2"/><rect x="1022.3" y="631.8" width="2" height="2"/><rect x="1022.3" y="653.8" width="2" height="2"/><rect x="1022.3" y="675.8" width="2" height="2"/><rect x="1022.3" y="697.8" width="2" height="2"/><rect x="1022.3" y="719.8" width="2" height="2"/><rect x="1022.3" y="741.9" width="2" height="2"/><rect x="1022.3" y="763.9" width="2" height="2"/><rect x="1022.3" y="785.9" width="2" height="2"/><rect x="1022.3" y="807.9" width="2" height="2"/><rect x="1022.3" y="829.9" width="2" height="2"/><rect x="1022.3" y="852.0" width="2" height="2"/><rect x="1284.0" y="125.3" width="2" height="2"/><rect x="1284.0" y="147.3" width="2" height="2"/><rect x="1284.0" y="169.3" width="2" height="2"/><rect x="1284.0" y="191.4" width="2" height="2"/><rect x="1284.0" y="213.4" width="2" height="2"/><rect x="1284.0" y="235.4" width="2" height="2"/><rect x="1284.0" y="257.4" width="2" height="2"/><rect x="1284.0" y="279.4" width="2" height="2"/><rect x="1284.0" y="301.5" width="2" height="2"/><rect x="1284.0" y="323.5" width="2" height="2"/><rect x="1284.0" y="345.5" width="2" height="2"/><rect x="1284.0" y="367.5" width="2" height="2"/><rect x="1284.0" y="389.5" width="2" height="2"/><rect x="1284.0" y="411.6" width="2" height="2"/><rect x="1284.0" y="433.6" width="2" height="2"/><rect x="1284.0" y="455.6" width="2" height="2"/><rect x="1284.0" y="477.6" width="2" height="2"/><rect x="1284.0" y="499.6" width="2" height="2"/><rect x="1284.0" y="521.7" width="2" height="2"/><rect x="1284.0" y="543.7" width="2" height="2"/><rect x="1284.0" y="565.7" width="2" height="2"/><rect x="1284.0" y="587.7" width="2" height="2"/><rect x="1284.0" y="609.7" width="2" height="2"/><rect x="1284.0" y="631.8" width="2" height="2"/><rect x="1284.0" y="653.8" width="2" height="2"/><rect x="1284.0" y="675.8" width="2" height="2"/><rect x="1284.0" y="697.8" width="2" height="2"/><rect x="1284.0" y="719.8" width="2" height="2"/><rect x="1284.0" y="741.9" width="2" height="2"/><rect x="1284.0" y="763.9" width="2" height="2"/><rect x="1284.0" y="785.9" width="2" height="2"/><rect x="1284.0" y="807.9" width="2" height="2"/><rect x="1284.0" y="829.9" width="2" height="2"/><rect x="1284.0" y="852.0" width="2" height="2"/><rect x="1545.6" y="125.3" width="2" height="2"/><rect x="1545.6" y="147.3" width="2" height="2"/><rect x="1545.6" y="169.3" width="2" height="2"/><rect x="1545.6" y="191.4" width="2" height="2"/><rect x="1545.6" y="213.4" width="2" height="2"/><rect x="1545.6" y="235.4" width="2" height="2"/><rect x="1545.6" y="257.4" width="2" height="2"/><rect x="1545.6" y="279.4" width="2" height="2"/><rect x="1545.6" y="301.5" width="2" height="2"/><rect x="1545.6" y="323.5" width="2" height="2"/><rect x="1545.6" y="345.5" width="2" height="2"/><rect x="1545.6" y="367.5" width="2" height="2"/><rect x="1545.6" y="389.5" width="2" height="2"/><rect x="1545.6" y="411.6" width="2" height="2"/><rect x="1545.6" y="433.6" width="2" height="2"/><rect x="1545.6" y="455.6" width="2" height="2"/><rect x="1545.6" y="477.6" width="2" height="2"/><rect x="1545.6" y="499.6" width="2" height="2"/><rect x="1545.6" y="521.7" width="2" height="2"/><rect x="1545.6" y="543.7" width="2" height="2"/><rect x="1545.6" y="565.7" width="2" height="2"/><rect x="1545.6" y="587.7" width="2" height="2"/><rect x="1545.6" y="609.7" width="2" height="2"/><rect x="1545.6" y="631.8" width="2" height="2"/><rect x="1545.6" y="653.8" width="2" height="2"/><rect x="1545.6" y="675.8" width="2" height="2"/><rect x="1545.6" y="697.8" width="2" height="2"/><rect x="1545.6" y="719.8" width="2" height="2"/><rect x="1545.6" y="741.9" width="2" height="2"/><rect x="1545.6" y="763.9" width="2" height="2"/><rect x="1545.6" y="785.9" width="2" height="2"/><rect x="1545.6" y="807.9" width="2" height="2"/><rect x="1545.6" y="829.9" width="2" height="2"/><rect x="1545.6" y="852.0" width="2" height="2"/><rect x="1807.3" y="125.3" width="2" height="2"/><rect x="1807.3" y="147.3" width="2" height="2"/><rect x="1807.3" y="169.3" width="2" height="2"/><rect x="1807.3" y="191.4" width="2" height="2"/><rect x="1807.3" y="213.4" width="2" height="2"/><rect x="1807.3" y="235.4" width="2" height="2"/><rect x="1807.3" y="257.4" width="2" height="2"/><rect x="1807.3" y="279.4" width="2" height="2"/><rect x="1807.3" y="301.5" width="2" height="2"/><rect x="1807.3" y="323.5" width="2" height="2"/><rect x="1807.3" y="345.5" width="2" height="2"/><rect x="1807.3" y="367.5" width="2" height="2"/><rect x="1807.3" y="389.5" width="2" height="2"/><rect x="1807.3" y="411.6" width="2" height="2"/><rect x="1807.3" y="433.6" width="2" height="2"/><rect x="1807.3" y="455.6" width="2" height="2"/><rect x="1807.3" y="477.6" width="2" height="2"/><rect x="1807.3" y="499.6" width="2" height="2"/><rect x="1807.3" y="521.7" width="2" height="2"/><rect x="1807.3" y="543.7" width="2" height="2"/><rect x="1807.3" y="565.7" width="2" height="2"/><rect x="1807.3" y="587.7" width="2" height="2"/><rect x="1807.3" y="609.7" width="2" height="2"/><rect x="1807.3" y="631.8" width="2" height="2"/><rect x="1807.3" y="653.8" width="2" height="2"/><rect x="1807.3" y="675.8" width="2" height="2"/><rect x="1807.3" y="697.8" width="2" height="2"/><rect x="1807.3" y="719.8" width="2" height="2"/><rect x="1807.3" y="741.9" width="2" height="2"/><rect x="1807.3" y="763.9" width="2" height="2"/><rect x="1807.3" y="785.9" width="2" height="2"/><rect x="1807.3" y="807.9" width="2" height="2"/><rect x="1807.3" y="829.9" width="2" height="2"/><rect x="1807.3" y="852.0" width="2" height="2"/></g><g stroke="#fff" stroke-width="2"><path d="M245 148.0H255"/><path d="M245 312.7H255"/><path d="M245 477.3H255"/><path d="M245 642.0H255"/><path d="M245 807.5H255"/><path d="M500.0 874V884"/><path d="M761.7 874V884"/><path d="M1023.3 874V884"/><path d="M1285.0 874V884"/><path d="M1546.6 874V884"/><path d="M1808.3 874V884"/></g><g fill="#f2f2f2" font-size="24" letter-spacing="-1.0"><text x="236" y="156.5" text-anchor="end">250</text><text x="236" y="321.2" text-anchor="end">200</text><text x="236" y="485.8" text-anchor="end">150</text><text x="236" y="650.5" text-anchor="end">100</text><text x="236" y="816.0" text-anchor="end">50</text><text x="500.0" y="910" text-anchor="middle">170</text><text x="761.7" y="910" text-anchor="middle">180</text><text x="1023.3" y="910" text-anchor="middle">190</text><text x="1285.0" y="910" text-anchor="middle">200</text><text x="1546.6" y="910" text-anchor="middle">210</text><text x="1808.3" y="910" text-anchor="middle">220</text><text x="1038" y="945" text-anchor="middle" font-size="24.7" letter-spacing="0">Time (s)</text><text transform="translate(180 497) rotate(-90)" text-anchor="middle" font-size="25.3" letter-spacing="0">Power (W)</text><text x="1039.2" y="102.5" letter-spacing="0" text-anchor="middle" font-size="29" textLength="270" lengthAdjust="spacingAndGlyphs">PCI EXPRESS POWER</text></g><clipPath id="cp"><rect x="256" y="121" width="1568" height="752"/></clipPath><path d="M255.1 439.3 L258.6 375.0 L263.7 545.1 L271.4 236.3 L276.6 523.7 L284.3 230.6 L288.0 244.9 L290.9 339.2 L293.1 349.2 L295.1 535.1 L298.0 533.7 L300.9 565.1 L302.3 559.4 L305.1 585.1 L308.0 460.8 L311.4 462.2 L313.1 447.9 L318.0 590.9 L323.7 430.7 L327.4 579.4 L330.0 575.1 L336.6 415.0 L340.0 526.5 L342.3 472.2 L344.6 470.8 L348.0 399.3 L350.3 390.7 L353.1 439.3 L355.1 422.2 L357.4 243.5 L360.9 254.9 L368.0 519.4 L373.7 375.0 L376.6 579.4 L381.4 262.0 L387.1 509.4 L389.4 340.7 L392.3 476.5 L395.1 324.9 L399.4 502.2 L402.3 339.2 L405.1 483.6 L407.4 274.9 L410.9 566.5 L413.1 337.8 L415.1 493.6 L418.0 370.7 L420.9 510.8 L423.1 252.0 L426.6 532.2 L428.6 296.4 L431.4 542.2 L434.3 320.7 L438.9 502.2 L441.4 380.7 L445.1 385.0 L448.0 379.3 L449.4 407.9 L452.3 226.3 L455.1 449.3 L457.4 304.9 L460.3 432.2 L463.1 299.2 L465.4 450.8 L468.3 299.2 L470.6 446.5 L473.1 246.3 L476.0 470.8 L478.6 320.7 L483.1 476.5 L486.0 259.2 L489.4 463.6 L494.0 376.4 L497.1 549.4 L502.0 356.4 L507.1 472.2 L509.4 294.9 L511.7 370.7 L515.1 353.5 L520.3 495.1 L522.9 227.7 L528.9 430.7 L530.9 422.2 L533.1 479.3 L536.0 266.3 L541.4 523.7 L543.7 214.9 L546.0 216.3 L552.3 442.2 L554.3 304.9 L557.4 469.3 L559.4 392.1 L563.7 396.4 L568.0 452.2 L570.0 399.3 L572.3 430.7 L575.7 366.4 L578.0 465.0 L580.3 243.5 L583.1 525.1 L586.0 360.7 L588.9 407.9 L593.7 422.2 L596.6 459.3 L598.9 306.4 L601.4 515.1 L606.6 244.9 L609.4 487.9 L614.6 246.3 L620.0 566.5 L625.1 286.4 L630.3 582.3 L633.1 476.5 L635.1 475.0 L638.0 399.3 L640.3 274.9 L642.9 293.5 L650.9 553.7 L656.0 242.0 L666.6 545.1 L671.7 263.5 L677.1 533.7 L684.6 267.2 L686.6 499.4 L690.3 543.7 L694.3 482.2 L696.6 486.5 L699.4 519.4 L701.7 517.9 L703.1 389.3 L706.6 386.4 L709.4 375.0 L713.1 241.5 L716.6 412.1 L720.0 362.1 L724.3 212.9 L729.4 545.1 L734.6 232.0 L737.4 253.5 L742.9 528.0 L748.0 252.0 L753.7 410.7 L756.6 347.8 L761.1 442.2 L766.0 262.0 L776.6 580.8 L779.4 369.3 L781.7 456.5 L784.6 450.8 L787.4 419.3 L790.3 413.6 L792.6 365.0 L795.1 365.0 L800.3 446.5 L802.9 372.1 L805.1 400.7 L808.0 396.4 L810.9 282.1 L813.7 389.3 L815.7 385.0 L818.0 415.0 L821.4 307.8 L824.3 496.5 L827.1 382.1 L828.9 456.5 L831.4 333.5 L834.6 385.0 L837.1 499.4 L840.3 367.8 L842.6 366.4 L845.1 306.4 L847.4 469.3 L850.0 360.7 L852.9 480.8 L855.1 322.1 L858.0 347.8 L860.3 319.2 L863.7 342.1 L866.6 403.6 L868.6 365.0 L873.7 477.9 L876.3 326.4 L878.9 412.1 L881.4 403.6 L883.7 412.1 L886.6 309.2 L891.7 366.4 L894.0 324.9 L898.0 347.8 L900.3 362.1 L902.3 493.6 L905.1 415.0 L908.0 410.7 L910.9 427.9 L915.7 515.1 L918.0 397.9 L920.3 399.3 L926.0 480.8 L928.9 416.4 L931.7 406.4 L934.6 322.1 L936.6 304.9 L938.9 324.9 L941.7 522.2 L944.3 436.5 L947.1 492.2 L955.7 427.9 L957.4 426.5 L960.0 297.8 L965.1 516.5 L970.3 316.4 L973.1 380.7 L975.4 345.0 L978.6 416.4 L980.9 352.1 L983.7 446.5 L988.9 415.0 L991.4 324.9 L995.1 373.5 L997.4 357.8 L1000.9 396.4 L1003.1 402.1 L1004.6 453.6 L1007.1 380.7 L1010.0 390.7 L1012.3 420.7 L1014.9 337.8 L1018.0 413.6 L1020.9 423.6 L1025.7 360.7 L1028.0 436.5 L1030.9 352.1 L1033.7 409.3 L1036.0 422.2 L1038.6 519.4 L1048.9 336.4 L1051.4 373.5 L1053.7 280.6 L1060.9 405.0 L1064.3 346.4 L1067.1 425.0 L1070.3 357.8 L1072.3 375.0 L1077.4 335.0 L1080.3 502.2 L1083.1 310.6 L1085.7 319.2 L1088.6 310.6 L1090.9 422.2 L1096.0 343.5 L1100.9 339.2 L1103.7 403.6 L1106.0 399.3 L1109.4 447.9 L1111.7 416.4 L1116.6 462.2 L1119.4 382.1 L1121.7 390.7 L1130.3 316.4 L1132.9 430.7 L1135.1 370.7 L1138.0 366.4 L1141.7 430.7 L1144.6 430.7 L1146.0 472.2 L1148.6 383.6 L1150.9 396.4 L1153.7 379.3 L1156.6 385.0 L1158.9 402.1 L1161.7 365.0 L1166.6 432.2 L1169.4 376.4 L1173.7 393.6 L1177.1 330.7 L1179.4 387.9 L1181.7 360.7 L1187.4 427.9 L1190.3 357.8 L1192.9 356.4 L1195.1 352.1 L1198.0 467.9 L1200.9 326.4 L1203.1 410.7 L1208.6 285.5 L1211.4 406.4 L1213.7 402.1 L1216.6 365.0 L1219.4 422.2 L1222.3 314.9 L1226.6 436.5 L1229.4 302.1 L1232.3 437.9 L1235.1 304.9 L1237.4 457.9 L1240.3 427.9 L1245.1 306.4 L1248.0 390.7 L1250.9 308.4 L1253.7 425.0 L1256.0 420.7 L1258.0 365.0 L1260.3 362.1 L1264.3 436.5 L1267.4 392.1 L1271.1 387.3 L1274.0 420.7 L1276.6 423.6 L1279.4 336.4 L1281.7 350.7 L1285.1 413.6 L1290.0 437.9 L1292.9 396.4 L1295.1 465.0 L1298.0 367.8 L1300.3 396.4 L1302.6 390.7 L1306.0 423.6 L1308.0 413.6 L1310.9 413.6 L1315.7 363.5 L1318.6 396.4 L1321.4 359.3 L1323.7 402.1 L1326.6 335.0 L1329.4 370.7 L1332.3 373.5 L1334.3 472.2 L1336.9 369.3 L1339.1 445.0 L1342.0 294.9 L1344.6 390.7 L1346.6 365.0 L1349.4 393.6 L1352.3 385.0 L1355.1 254.9 L1358.0 503.6 L1361.4 324.9 L1363.7 316.4 L1366.6 324.9 L1373.7 493.6 L1378.9 282.1 L1386.6 480.8 L1388.0 480.8 L1390.0 422.2 L1394.3 420.7 L1400.0 373.5 L1402.9 480.8 L1410.3 303.5 L1415.1 442.2 L1417.4 383.6 L1420.9 456.5 L1425.1 436.5 L1428.0 423.6 L1431.4 469.3 L1433.1 324.9 L1436.0 379.3 L1439.4 385.0 L1441.7 410.7 L1444.0 356.4 L1446.9 423.6 L1449.4 330.7 L1452.3 416.4 L1455.1 301.5 L1459.4 437.9 L1462.3 345.0 L1465.7 476.5 L1468.0 382.1 L1470.3 405.0 L1472.9 376.4 L1476.0 399.3 L1480.9 486.5 L1483.7 393.6 L1486.0 389.3 L1488.9 442.2 L1491.4 407.9 L1494.3 407.9 L1496.6 435.0 L1499.4 359.3 L1502.3 347.8 L1505.1 392.1 L1509.4 407.9 L1512.3 405.0 L1515.1 342.1 L1520.0 457.9 L1522.9 355.0 L1525.7 427.9 L1528.0 375.0 L1533.7 439.3 L1535.4 313.5 L1538.0 322.1 L1541.4 538.0 L1544.3 373.5 L1546.6 413.6 L1551.4 320.7 L1554.3 332.1 L1559.4 425.0 L1561.7 390.7 L1565.1 462.2 L1567.4 343.5 L1570.0 333.5 L1573.1 420.7 L1578.0 303.5 L1580.9 406.4 L1583.1 409.3 L1585.7 472.2 L1590.9 317.8 L1593.7 503.6 L1596.6 296.4 L1598.9 373.5 L1601.4 350.7 L1606.6 492.2 L1608.9 302.1 L1612.9 316.4 L1618.0 457.9 L1619.7 425.0 L1622.3 510.8 L1625.1 316.4 L1632.9 465.0 L1635.7 349.2 L1640.3 489.4 L1643.1 310.6 L1651.7 387.9 L1654.3 363.5 L1656.6 460.8 L1659.4 365.0 L1661.7 353.5 L1664.3 409.3 L1666.6 339.2 L1669.4 442.2 L1671.7 416.4 L1674.6 453.6 L1677.4 382.1 L1680.3 389.3 L1685.1 323.5 L1688.0 430.7 L1690.0 392.1 L1692.9 467.9 L1698.0 310.6 L1700.9 465.0 L1703.7 396.4 L1707.1 386.4 L1709.4 417.9 L1712.3 335.0 L1714.6 324.9 L1716.6 383.6 L1721.7 319.8 L1724.3 497.9 L1732.3 305.5 L1735.7 363.5 L1738.6 367.8 L1742.3 493.6 L1745.1 373.5 L1748.0 370.7 L1752.3 433.6 L1755.7 370.7 L1758.6 379.3 L1763.1 503.6 L1768.9 279.2 L1771.7 502.2 L1773.7 405.0 L1776.6 509.4 L1779.4 359.3 L1781.7 437.9 L1787.1 309.2 L1790.0 486.5 L1795.1 377.8 L1798.0 443.6 L1803.7 336.4 L1806.0 332.1 L1808.3 395.0 L1810.9 326.4 L1813.1 459.3 L1815.7 352.1 L1819.1 453.6 L1822.9 343.5" fill="none" stroke="#7ac004" stroke-width="3.9" stroke-linejoin="round" stroke-linecap="round" clip-path="url(#cp)"/></svg><div class="lbl" style="left:2044px;top:400px;font-size:18.5px;line-height:24px">Plot Options</div><div class="btn" style="left:2038px;top:432.3px;width:112px;height:34.5px;font-size:17.5px;line-height:34.5px"><span style="letter-spacing:-1.6px">10</span> sec</div><div class="btn" style="left:2038px;top:475.7px;width:112px;height:34.5px;font-size:17.5px;line-height:34.5px"><span style="letter-spacing:-1.6px">1</span> min</div><div class="btn" style="left:2038px;top:519.1px;width:112px;height:34.5px;font-size:17.5px;line-height:34.5px"><span style="letter-spacing:-1.6px">10</span> min</div><div class="btn" style="left:2038px;top:562.5px;width:112px;height:34.5px;font-size:17.5px;line-height:34.5px"><span style="letter-spacing:-1.6px">1</span> hour</div><div class="btn" style="left:2038px;top:605.9px;width:112px;height:34.5px;font-size:17.5px;line-height:34.5px">Max</div><div class="cb" style="left:2038px;top:652.5px"></div><div class="lbl" style="left:2064px;top:649.5px;font-size:18.2px;line-height:24px">Auto scroll</div><div class="cb" style="left:2038px;top:683.8px"></div><div class="lbl" style="left:2064px;top:680.8px;font-size:18.2px;line-height:24px">Auto scale</div><div class="gb" style="left:2035px;top:1071px;width:119px;height:276.5px;border-color:#9c9c9c"></div><div class="gbl" style="left:2043.5px;top:1061.8px;font-size:17.2px">Plot Data</div><div class="row" style="top:1083.0px;background:#76b900"><div class="b"></div><svg class="abs" style="left:10px;top:11.5px" width="16" height="16" viewBox="0 0 16 16"><path d="M2.5 7L6 10.5L13 3.5" stroke="#000" stroke-width="3" fill="none"/></svg><div class="x" style="color:#111">TOTAL</div></div><div class="row" style="top:1120.5px;background:#0a78dc"><div class="b"></div><div class="x" style="color:#06264a"><span style="letter-spacing:-2.5px">12</span>V<span style="letter-spacing:-2.5px">1</span></div></div><div class="row" style="top:1158.0px;background:#008c6e"><div class="b"></div><div class="x" style="color:#00281e"><span style="letter-spacing:-2.5px">12</span>V<span style="letter-spacing:-2.5px">2</span></div></div><div class="row" style="top:1195.5px;background:#e8324b"><div class="b"></div><div class="x" style="color:#4a0a12"><span style="letter-spacing:-2.5px">12</span>V<span style="letter-spacing:-2.5px">3</span></div></div><div class="row" style="top:1233.0px;background:#a020f0"><div class="b"></div><div class="x" style="color:#2a0550">SLOT</div></div><div class="row" style="top:1270.5px;background:#ff8020"><div class="b"></div><div class="x" style="color:#4a2000"><span style="letter-spacing:-2.5px">3</span>V<span style="letter-spacing:-2.5px">3</span></div></div><div class="row" style="top:1308.0px;background:#f0f0f0"><div class="b"></div><div class="x" style="color:#111">AUX</div></div><div class="abs" style="left:0;top:1363px;width:2163px;height:31px;background:#2d2d2d;border-top:3px solid #232323"></div><div class="abs" style="left:1890px;top:1364px;width:2px;height:29px;background:#484848"></div><div class="abs" style="left:2002px;top:1364px;width:2px;height:29px;background:#484848"></div><div class="lbl" style="left:18px;top:1368px;font-size:17.9px;line-height:24px">PCAT C<span style="letter-spacing:-1.0px">00</span> connected, FW v<span style="letter-spacing:-1.0px">1</span>.<span style="letter-spacing:-1.0px">1</span></div><div class="lbl" style="left:1910px;top:1368px;font-size:17.6px;line-height:24px">dt: <span style="letter-spacing:-1.6px">100</span>ms</div><div class="lbl" style="left:2022px;top:1368px;font-size:17.6px;line-height:24px">Data Backlog: 0</div></div></body></html>
